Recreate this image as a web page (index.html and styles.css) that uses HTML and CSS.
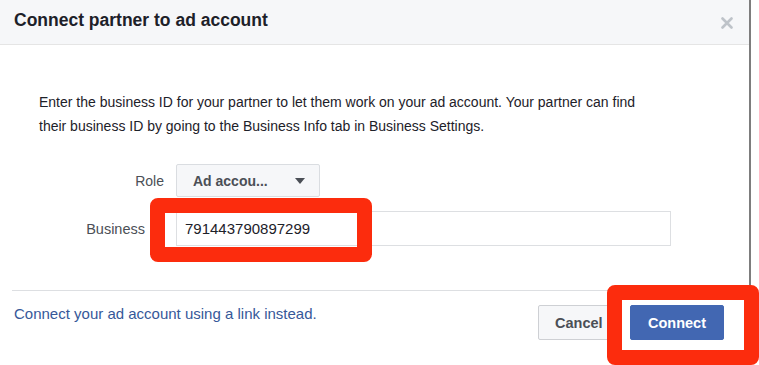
FILE: index.html
```html
<!DOCTYPE html>
<html lang="en">
<head>
  <meta charset="UTF-8" />
  <meta name="viewport" content="width=device-width, initial-scale=1" />
  <title>Connect partner to ad account</title>
  <link rel="stylesheet" href="styles.css">
</head>
<body>
  <div class="page">
    <div class="dialog">
      <header class="dialog-header">
        <h1>Connect partner to ad account</h1>
        <a href="#" class="close" aria-label="Close">
          <svg width="12" height="12" viewBox="0 0 12 12"><path d="M1.5 1.5 L10.5 10.5 M10.5 1.5 L1.5 10.5" stroke="#bec3c9" stroke-width="2.6" stroke-linecap="round"/></svg>
        </a>
      </header>
      <div class="dialog-body">
        <p class="intro">Enter the business ID for your partner to let them work on your ad account. Your partner can find their business ID by going to the Business Info tab in Business Settings.</p>
        <div class="form">
          <div class="row">
            <label class="label label-role">Role</label>
            <button class="select">Ad accou...
              <svg class="caret" width="10" height="6" viewBox="0 0 10 6"><path d="M0 0 H10 L5 6 Z" fill="#4b4f56"/></svg>
            </button>
          </div>
          <div class="row">
            <label class="label label-business">Business</label>
            <input type="text" class="field" value="791443790897299" />
          </div>
        </div>
      </div>
      <footer class="dialog-footer">
        <a href="#" class="alt-link">Connect your ad account using a link instead.</a>
        <div class="actions">
          <button class="btn btn-cancel">Cancel</button>
          <button class="btn btn-primary">Connect</button>
        </div>
      </footer>
    </div>
    <span class="highlight hl-business"></span>
    <span class="highlight hl-connect"></span>
  </div>
</body>
</html>
```

FILE: styles.css
```css
* {
  box-sizing: border-box;
  margin: 0;
  padding: 0;
}
body {
  font-family: "Liberation Sans", Arial, sans-serif;
  background: #fff;
  color: #1d2129;
  width: 759px;
  height: 365px;
  overflow: hidden;
}
.page {
  position: relative;
  height: 365px;
}
.dialog {
  width: 751px;
  height: 365px;
  border-right: 2px solid #7d7d7d;
  background: #fff;
}
.dialog-header {
  height: 45px;
  background: #f6f7f9;
  border-bottom: 1px solid #e5e5e5;
  display: flex;
  justify-content: space-between;
  align-items: flex-start;
  padding: 10px 0 0 14px;
}
.dialog-header h1 {
  font-size: 17.5px;
  line-height: 20px;
  font-weight: 700;
  color: #1d2129;
}
.close {
  margin: 7px 16px 0 0;
  display: block;
  line-height: 0;
}
.dialog-body {
  padding: 45px 0 44px 27px;
  border-bottom: 1px solid #dddfe2;
  margin: 0 0 0 12px;
}
.intro {
  font-size: 14px;
  line-height: 24px;
  width: 610px;
  color: #1d2129;
}
.form {
  margin-top: 26px;
  display: flex;
  flex-direction: column;
  gap: 14px;
}
.row {
  display: flex;
  align-items: center;
}
.label {
  font-size: 14px;
  color: #4b4f56;
  text-align: right;
}
.label-role {
  width: 125px;
  margin-right: 12px;
}
.label-business {
  width: 106px;
  margin-right: 31px;
  font-size: 14.5px;
}
.select {
  width: 144px;
  height: 33px;
  background: #f6f7f9;
  border: 1px solid #dadde1;
  border-radius: 2px;
  font-family: inherit;
  font-size: 14px;
  font-weight: 700;
  color: #4b4f56;
  display: flex;
  align-items: center;
  justify-content: space-between;
  padding: 0 14px 0 16px;
}
.caret {
  display: block;
}
.field {
  width: 495px;
  height: 35px;
  border: 1px solid #dddfe2;
  font-family: inherit;
  font-size: 15px;
  color: #1d2129;
  padding: 0 8px;
  outline: none;
}
.dialog-footer {
  display: flex;
  justify-content: space-between;
  align-items: flex-start;
  padding: 14px 25px 0 14px;
}
.alt-link {
  font-size: 15px;
  line-height: 18px;
  color: #365899;
  text-decoration: none;
}
.actions {
  display: flex;
  gap: 10px;
}
.btn {
  height: 35px;
  border-radius: 2px;
  font-family: inherit;
  font-size: 14.5px;
  font-weight: 700;
  cursor: pointer;
}
.btn-cancel {
  width: 82px;
  background: #f6f7f9;
  border: 1px solid #ced0d4;
  color: #4b4f56;
  text-align: left;
  padding-left: 16px;
}
.btn-primary {
  width: 94px;
  background: #4267b2;
  border: 1px solid #4267b2;
  color: #fff;
}
.highlight {
  position: absolute;
  border: 15px solid #fc2c0d;
  border-radius: 8px;
  pointer-events: none;
}
.hl-business {
  left: 150px;
  top: 198px;
  width: 222px;
  height: 64px;
}
.hl-connect {
  left: 607px;
  top: 285px;
  width: 152px;
  height: 80px;
}
```
